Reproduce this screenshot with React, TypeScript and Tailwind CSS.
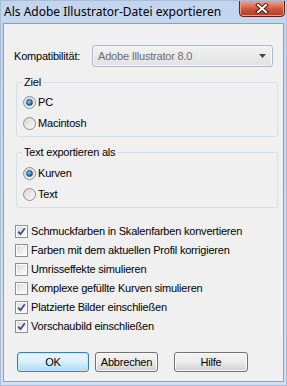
import React from "react";

const titleFont = { fontFamily: '"Noto Sans", "Open Sans", sans-serif' };
const bodyFont = { fontFamily: '"Liberation Sans", Arial, sans-serif', letterSpacing: "-0.2px" };

function Radio({ checked, label }: { checked: boolean; label: string }) {
  return (
    <div className="flex items-center h-[21px]">
      <div className="w-[13px] h-[13px] rounded-full border border-[#8e8f8f] bg-gradient-to-br from-[#d6d6d6] to-[#fafafa] flex items-center justify-center">
        {checked && (
          <div className="w-[7px] h-[7px] rounded-full bg-[radial-gradient(circle_at_40%_35%,#7fd0f7,#1b6aa8_70%,#0d3f6e)] border border-[#1c4f7d]" />
        )}
      </div>
      <span className="ml-[2px] text-[11px] text-black leading-none">{label}</span>
    </div>
  );
}

function Check({ checked, label }: { checked: boolean; label: string }) {
  return (
    <div className="flex items-center h-[19px]">
      <div className="w-[13px] h-[13px] border border-[#8e8f8f] bg-white p-[1px]">
        <div className="w-full h-full bg-gradient-to-br from-[#dcdcdc] to-[#fbfbfb] flex items-center justify-center">
          {checked && (
            <svg width="9" height="9" viewBox="0 0 9 9">
              <path d="M1.2 4.6 L3.4 7.2 L7.8 1.2" fill="none" stroke="#3a4f8c" strokeWidth="1.8" strokeLinejoin="round" />
            </svg>
          )}
        </div>
      </div>
      <span className="ml-[3px] text-[11px] text-black leading-none whitespace-nowrap">{label}</span>
    </div>
  );
}

function Group({ title, children, top }: { title: string; children: React.ReactNode; top: number }) {
  return (
    <div
      className="relative ml-[12px] w-[262px] border border-[#d5dfe5] rounded-[3px] pl-[6px] pb-[2px]"
      style={{ paddingTop: top }}
    >
      <span className="absolute left-[5px] top-[-8px] px-[2px] bg-[#f0f0f0] text-[11px] leading-[14px] text-black">
        {title}
      </span>
      {children}
    </div>
  );
}

function Btn({ label, w, def }: { label: string; w: number; def?: boolean }) {
  return (
    <div
      className={
        "h-[20px] rounded-[3px] border flex items-center justify-center text-[11px] text-black " +
        (def
          ? "border-[#3c7fb1] bg-gradient-to-b from-[#eaf6fd] via-[#d9f0fc] to-[#a7d9f5] shadow-[inset_0_0_0_1px_#c8e8fb]"
          : "border-[#707070] bg-gradient-to-b from-[#f2f2f2] via-[#ebebeb] to-[#cfcfcf] shadow-[inset_0_0_0_1px_#fcfcfc]")
      }
      style={{ width: w }}
    >
      {label}
    </div>
  );
}

export default function App() {
  return (
    <div className="w-[287px] h-[386px] bg-gradient-to-b from-[#c3d5ee] to-[#d3e0f1] border border-[#a9bdd8] flex flex-col overflow-hidden">
      <div className="h-[22px] flex items-start justify-between shrink-0">
        <span className="mt-[3px] ml-[3px] text-[12px] leading-[16px] text-black" style={titleFont}>
          Als Adobe Illustrator-Datei exportieren
        </span>
        <div className="mr-[1px] mt-[-1px] w-[46px] h-[17px] rounded-b-[4px] border border-[#6b1d12] bg-gradient-to-b from-[#e7a898] via-[#cf5a40] to-[#b63722] flex items-center justify-center shadow-[inset_0_0_0_1px_#e99a85]">
          <svg width="14" height="11" viewBox="0 0 14 11">
            <path d="M3 2 L11 9 M11 2 L3 9" stroke="#4a1a12" strokeWidth="4" strokeLinecap="square" />
            <path d="M3 2 L11 9 M11 2 L3 9" stroke="#ffffff" strokeWidth="2" strokeLinecap="square" />
          </svg>
        </div>
      </div>
      <div
        className="mx-[2px] mb-[3px] flex-1 border border-[#8c9fb8] bg-[#f0f0f0] flex flex-col text-black"
        style={bodyFont}
      >
        <div className="flex items-center mt-[21px] h-[22px]">
          <span className="ml-[10px] w-[78px] text-[11px]">Kompatibilität:</span>
          <div className="w-[181px] h-[22px] rounded-[3px] border border-[#a7b8cf] bg-gradient-to-b from-[#f2f2f2] to-[#e1e1e1] shadow-[inset_0_0_0_1px_#f8f8f8] flex items-center justify-between px-[5px]">
            <span className="text-[11px] text-[#6d6d6d]">Adobe Illustrator 8.0</span>
            <svg width="7" height="4" viewBox="0 0 7 4" className="mr-[1px]">
              <path d="M0 0 H7 L3.5 4 Z" fill="#444" />
            </svg>
          </div>
        </div>
        <div className="mt-[15px]">
          <Group title="Ziel" top={9}>
            <Radio checked label="PC" />
            <Radio checked={false} label="Macintosh" />
          </Group>
        </div>
        <div className="mt-[15px]">
          <Group title="Text exportieren als" top={10}>
            <Radio checked label="Kurven" />
            <Radio checked={false} label="Text" />
          </Group>
        </div>
        <div className="mt-[14px] ml-[11px] flex flex-col">
          <Check checked label="Schmuckfarben in Skalenfarben konvertieren" />
          <Check checked={false} label="Farben mit dem aktuellen Profil korrigieren" />
          <Check checked={false} label="Umrisseffekte simulieren" />
          <Check checked={false} label="Komplexe gefüllte Kurven simulieren" />
          <Check checked label="Platzierte Bilder einschließen" />
          <Check checked label="Vorschaubild einschließen" />
        </div>
        <div className="mt-[16px] ml-[13px] flex">
          <Btn label="OK" w={72} def />
          <div className="ml-[6px]">
            <Btn label="Abbrechen" w={63} />
          </div>
          <div className="ml-[16px]">
            <Btn label="Hilfe" w={74} />
          </div>
        </div>
      </div>
    </div>
  );
}
